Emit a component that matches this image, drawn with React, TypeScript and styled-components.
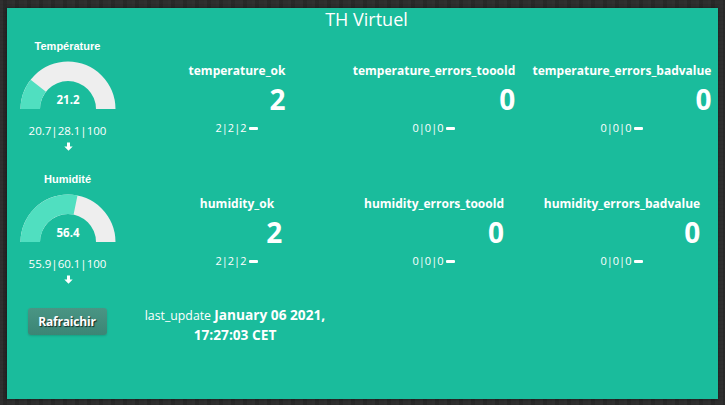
import React from "react";
import styled, { createGlobalStyle } from "styled-components";

const Global = createGlobalStyle`
  html, body { margin: 0; padding: 0; }
  body {
    width: 725px;
    height: 405px;
    overflow: hidden;
    background-color: #2b2b2b;
    background-image:
      repeating-linear-gradient(90deg, rgba(255,255,255,0.025) 0 3px, rgba(0,0,0,0.06) 3px 7px, rgba(255,255,255,0.015) 7px 12px),
      repeating-linear-gradient(0deg, rgba(0,0,0,0.05) 0 1px, transparent 1px 4px);
    font-family: "Open Sans", "DejaVu Sans", sans-serif;
  }
`;

const Panel = styled.div`
  margin: 8px 0 0 7px;
  width: 711px;
  height: 391px;
  background: #1abc9c;
  color: #ffffff;
  display: flex;
  flex-direction: column;
  box-shadow: 0 0 3px rgba(0, 0, 0, 0.5);
`;

const Title = styled.h1`
  margin: 0;
  padding-left: 8px;
  font-size: 18px;
  font-weight: 400;
  line-height: 22px;
  text-align: center;
`;

const Board = styled.div`
  margin-top: 9px;
  display: grid;
  grid-template-columns: 127px 206px 188px 188px;
  grid-template-rows: 133px 133px auto;
`;

const GaugeCell = styled.div`
  display: flex;
  flex-direction: column;
  align-items: center;
  padding-right: 6px;
`;

const GaugeLabel = styled.div`
  font-family: "Liberation Sans", Arial, sans-serif;
  font-size: 11px;
  font-weight: 700;
  line-height: 14px;
`;

const GaugeSvg = styled.svg`
  display: block;
  margin-top: 8px;
`;

const GaugeStats = styled.div`
  margin-top: 15px;
  font-size: 11.5px;
  line-height: 14px;
`;

const ArrowIcon = styled.svg`
  display: block;
  margin: 4px 0 0 2px;
`;

const MetricCell = styled.div`
  display: flex;
  justify-content: center;
  align-items: flex-start;
  padding-top: 25px;
`;

const MetricBox = styled.div`
  display: inline-flex;
  flex-direction: column;
`;

const MetricTitle = styled.div`
  font-size: 12px;
  font-weight: 700;
  line-height: 14px;
  white-space: nowrap;
`;

const MetricValue = styled.div<{ $shift?: number }>`
  margin-top: 7px;
  margin-right: ${(p) => -(p.$shift ?? 0)}px;
  font-size: 28px;
  font-weight: 700;
  line-height: 28px;
  text-align: right;
`;

const MetricStats = styled.div`
  margin-top: 8px;
  font-size: 11px;
  line-height: 14px;
  display: flex;
  align-items: center;
  justify-content: center;
  gap: 3px;
`;

const Trend = styled.span`
  display: inline-block;
  width: 9px;
  height: 3px;
  border-radius: 1px;
  background: #ffffff;
`;

const ButtonCell = styled.div`
  display: flex;
  justify-content: center;
  padding: 3px 7px 0 0;
`;

const RefreshButton = styled.button`
  width: 79px;
  height: 27px;
  border: none;
  border-radius: 3px;
  background: linear-gradient(#4a9584, #3b8575);
  color: #ffffff;
  font-family: "Open Sans", sans-serif;
  font-size: 12px;
  font-weight: 700;
  letter-spacing: -0.2px;
  text-shadow: 1px 1px 1px rgba(0, 0, 0, 0.7);
  box-shadow: 0 1px 2px rgba(0, 0, 0, 0.15);
  padding: 0;
  cursor: pointer;
`;

const UpdateCell = styled.div`
  text-align: center;
  font-size: 12.3px;
  line-height: 19px;
  padding: 0 4px 0 0;
`;

const UpdateValue = styled.strong`
  font-size: 13.7px;
  font-weight: 700;
`;

const R = 47.5;
const r = 28;
const CX = 48;
const CY = 48;

function pt(rad: number, a: number) {
  return `${(CX + rad * Math.cos(a)).toFixed(2)} ${(CY - rad * Math.sin(a)).toFixed(2)}`;
}

function arc(f0: number, f1: number) {
  const a0 = Math.PI * (1 - f0);
  const a1 = Math.PI * (1 - f1);
  return `M ${pt(R, a0)} A ${R} ${R} 0 0 1 ${pt(R, a1)} L ${pt(r, a1)} A ${r} ${r} 0 0 0 ${pt(r, a0)} Z`;
}

function Gauge({ label, value, stats }: { label: string; value: number; stats: string }) {
  const f = value / 100;
  return (
    <GaugeCell>
      <GaugeLabel>{label}</GaugeLabel>
      <GaugeSvg width={96} height={48} viewBox="0 0 96 48">
        <path d={arc(0, 1)} fill="#eeeeee" />
        <path d={arc(0, f)} fill="#50dfc0" />
        <text x={48} y={43} textAnchor="middle" fontSize={11.5} fontWeight={700} fill="#ffffff" fontFamily="'Open Sans', sans-serif">
          {value.toFixed(1)}
        </text>
      </GaugeSvg>
      <GaugeStats>{stats}</GaugeStats>
      <ArrowIcon width={9} height={9} viewBox="0 0 9 9">
        <path d="M3 0.4 H6 V4.4 H8.7 L4.5 8.8 L0.3 4.4 H3 Z" fill="#ffffff" />
      </ArrowIcon>
    </GaugeCell>
  );
}

function Metric({ title, value, stats, shift }: { title: string; value: string; stats: string; shift?: number }) {
  return (
    <MetricCell>
      <MetricBox>
        <MetricTitle>{title}</MetricTitle>
        <MetricValue $shift={shift}>{value}</MetricValue>
        <MetricStats>
          <span>{stats}</span>
          <Trend />
        </MetricStats>
      </MetricBox>
    </MetricCell>
  );
}

export default function App() {
  return (
    <>
      <Global />
      <Panel>
        <Title>TH Virtuel</Title>
        <Board>
          <Gauge label="Température" value={21.2} stats="20.7|28.1|100" />
          <Metric title="temperature_ok" value="2" stats="2|2|2" />
          <Metric title="temperature_errors_tooold" value="0" stats="0|0|0" />
          <Metric title="temperature_errors_badvalue" value="0" stats="0|0|0" />
          <Gauge label="Humidité" value={56.4} stats="55.9|60.1|100" />
          <Metric title="humidity_ok" value="2" stats="2|2|2" shift={8} />
          <Metric title="humidity_errors_tooold" value="0" stats="0|0|0" />
          <Metric title="humidity_errors_badvalue" value="0" stats="0|0|0" />
          <ButtonCell>
            <RefreshButton>Rafraichir</RefreshButton>
          </ButtonCell>
          <UpdateCell>
            last_update <UpdateValue>January 06 2021, 17:27:03 CET</UpdateValue>
          </UpdateCell>
        </Board>
      </Panel>
    </>
  );
}
